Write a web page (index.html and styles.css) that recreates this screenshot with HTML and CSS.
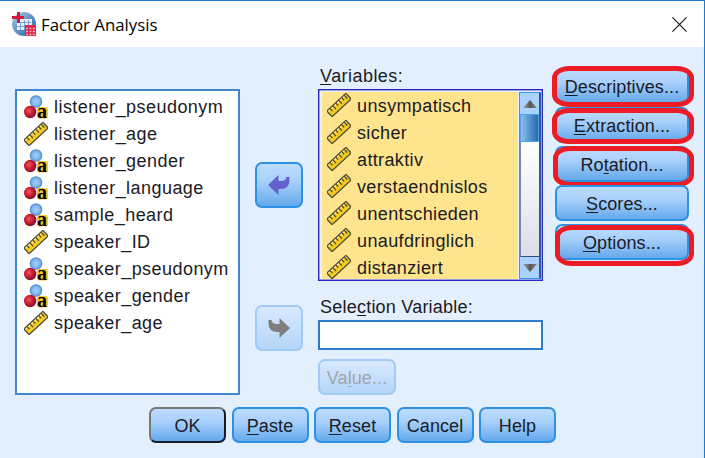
FILE: index.html
```html
<!DOCTYPE html>
<html lang="en">
<head>
<meta charset="utf-8">
<title>Factor Analysis</title>
<link rel="stylesheet" href="styles.css">
</head>
<body>
<svg class="defs" width="0" height="0" aria-hidden="true">
  <defs>
    <radialGradient id="blueBall"><stop offset="0" stop-color="#a5d0fa"/><stop offset=".65" stop-color="#7db5ee"/><stop offset="1" stop-color="#4b83c4"/></radialGradient>
    <radialGradient id="redBall" cx=".4" cy=".4"><stop offset="0" stop-color="#ef5663"/><stop offset=".6" stop-color="#cf2036"/><stop offset="1" stop-color="#96152b"/></radialGradient>
    <linearGradient id="globe" x2="1" y2="1"><stop offset="0" stop-color="#b9cee5"/><stop offset=".5" stop-color="#5f94c9"/><stop offset="1" stop-color="#27649f"/></linearGradient>
    <linearGradient id="tip"><stop offset="0" stop-color="#aaa"/><stop offset=".5" stop-color="#555"/><stop offset="1" stop-color="#888"/></linearGradient>
  </defs>
  <symbol id="nominal" viewBox="0 0 24 24">
    <circle cx="12" cy="6.500" r="6.300" fill="url(#blueBall)"/>
    <circle cx="6.200" cy="17" r="6.200" fill="url(#redBall)"/>
    <rect x="13" y="12" width="11" height="11.500" rx="2" fill="#f5c829"/>
  </symbol>
  <symbol id="scale" viewBox="0 0 24 24">
    <g transform="translate(12 12) rotate(-43)">
      <rect x="-13" y="-3.8" width="26" height="7.6" fill="#f4cb22" stroke="#4e4d3c" stroke-width="1.3"/>
      <path d="M-12-2.5H12" stroke="#fff0a0" stroke-width="1"/>
      <path d="M-9-3.5V0M-5-3.5V1M-1-3.5V0M3-3.5V1M7-3.5V0M10.500-3.500V1" stroke="#44412b" stroke-width="1.2"/>
    </g>
  </symbol>
</svg>
<main class="window">
  <header class="titlebar">
    <svg class="logo" viewBox="0 0 24 24">
      <circle cx="12" cy="12" r="12" fill="url(#globe)"/>
      <path d="M8 7H20V18H5V11H8Z" fill="#e8f1fa"/>
      <path d="M5 14.500H19M9 10.500H19M8.500 10V18M12.500 8V18M16.500 8V18" stroke="#79a4cf" stroke-width="1"/>
      <path d="M5 0H8V4H12V7H8V11H5V7H0V4H5Z" fill="#d3183c"/>
      <rect x="13" y="13" width="11" height="11" fill="#d8254a"/>
      <path d="M14 16.500H23M14 19.500H23M14 22.500H23" stroke="#f5b4c0" stroke-width="1.500" stroke-dasharray="2 1.400"/>
    </svg>
    <h1 class="title">Factor Analysis</h1>
    <svg class="close" viewBox="0 0 16 16"><path d="M.5.5 15.500 15.500M15.500.5.5 15.500" stroke="#111" stroke-width="1.200"/></svg>
  </header>
  <div class="content">
    <ul class="list source">
      <li><svg><use href="#nominal"/><text class="letter" x="13" y="23">a</text></svg>listener_pseudonym</li>
      <li><svg><use href="#scale"/></svg>listener_age</li>
      <li><svg><use href="#nominal"/><text class="letter" x="13" y="23">a</text></svg>listener_gender</li>
      <li><svg><use href="#nominal"/><text class="letter" x="13" y="23">a</text></svg>listener_language</li>
      <li><svg><use href="#nominal"/><text class="letter" x="13" y="23">a</text></svg>sample_heard</li>
      <li><svg><use href="#scale"/></svg>speaker_ID</li>
      <li><svg><use href="#nominal"/><text class="letter" x="13" y="23">a</text></svg>speaker_pseudonym</li>
      <li><svg><use href="#nominal"/><text class="letter" x="13" y="23">a</text></svg>speaker_gender</li>
      <li><svg><use href="#scale"/></svg>speaker_age</li>
    </ul>
    <div class="transfer">
      <button class="btn move" aria-label="Remove"><svg viewBox="0 0 22 20"><path d="M0 10 10.500 0V6H13C16 6 18 5 18.500 2H21.500V5C21.500 11 18 14 13 14H10.500V20Z" fill="#6560cf"/></svg></button>
      <button class="btn move off" disabled aria-label="Add"><svg viewBox="0 0 22 20"><path d="M22 10 11.500 0V6H9C6 6 4 5 3.500 2H.5V5C.5 11 4 14 9 14H11.500V20Z" fill="#7f7f7f"/></svg></button>
    </div>
    <section class="middle">
      <label class="label"><u>V</u>ariables:</label>
      <div class="variables">
        <ul class="list chosen">
          <li><svg><use href="#scale"/></svg>unsympatisch</li>
          <li><svg><use href="#scale"/></svg>sicher</li>
          <li><svg><use href="#scale"/></svg>attraktiv</li>
          <li><svg><use href="#scale"/></svg>verstaendnislos</li>
          <li><svg><use href="#scale"/></svg>unentschieden</li>
          <li><svg><use href="#scale"/></svg>unaufdringlich</li>
          <li><svg><use href="#scale"/></svg>distanziert</li>
        </ul>
        <div class="scrollbar">
          <div class="step"><svg viewBox="0 0 14 8"><path d="M0 8 7 0 14 8Z" fill="url(#tip)"/></svg></div>
          <div class="thumb"></div>
          <div class="track"></div>
          <div class="step"><svg viewBox="0 0 14 8"><path d="M0 0H14L7 8Z" fill="url(#tip)"/></svg></div>
        </div>
      </div>
      <label class="label selection">Sele<u>c</u>tion Variable:</label>
      <div class="field"></div>
      <button class="btn value off" disabled><span>Va<u>l</u>ue...</span></button>
    </section>
    <nav class="side">
      <button class="btn marked m1"><span><u>D</u>escriptives...</span></button>
      <button class="btn marked m2"><span><u>E</u>xtraction...</span></button>
      <button class="btn marked m3"><span>Ro<u>t</u>ation...</span></button>
      <button class="btn"><span><u>S</u>cores...</span></button>
      <button class="btn marked m5"><span><u>O</u>ptions...</span></button>
    </nav>
  </div>
  <footer class="actions">
    <button class="btn default"><span>OK</span></button>
    <button class="btn"><span><u>P</u>aste</span></button>
    <button class="btn"><span><u>R</u>eset</span></button>
    <button class="btn"><span>Cancel</span></button>
    <button class="btn"><span>Help</span></button>
  </footer>
</main>
</body>
</html>
```
FILE: styles.css
```css
*, *::after { box-sizing: border-box; }
body { margin: 0; }
.defs { position: absolute; }
.window {
  width: 705px; height: 458px; overflow: hidden;
  background: #e3effc;
  border-top: 1px solid #1a7bd0; border-right: 1px solid #1a7bd0;
  font: 18px/27px "Liberation Sans", sans-serif;
  letter-spacing: .45px; color: #1b1b25;
}
u { text-decoration-thickness: 1px; text-underline-offset: 2px; text-decoration-skip-ink: none; }
.titlebar {
  height: 46px; padding: 0 17px 0 12px;
  display: flex; align-items: center; background: #fff;
}
.logo { width: 24px; height: 24px; }
.title {
  margin: 0 auto 0 5px; padding-top: 1px;
  font: 400 16.8px/24px "Open Sans", sans-serif; letter-spacing: 0; color: #000;
}
.close { width: 15px; height: 15px; }
.content {
  height: 348px; padding-left: 15px;
  display: grid; grid-template-columns: 225px 48px 225px 134px;
  column-gap: 15px; align-items: start;
}
.list { list-style: none; margin: 0; padding: 0; }
.list li { height: 27px; display: flex; align-items: center; white-space: nowrap; }
.list svg { width: 24px; height: 24px; flex: none; margin-bottom: 2px; overflow: visible; }
.letter { font: bold 20px "Liberation Serif", serif; letter-spacing: 0; fill: #000; }
.source {
  height: 306px; margin-top: 42px; padding: 3px 0 0 7px;
  background: #fff; border: 2px solid #4187d0;
}
.source svg { margin-right: 6px; }
.transfer { padding-top: 115px; display: grid; gap: 97px; }
.btn {
  height: 36px; padding: 0;
  display: flex; align-items: center; justify-content: center;
  font: inherit; letter-spacing: .1px; color: inherit;
  border: 2px solid #2d91e5; border-radius: 7px;
  background: linear-gradient(#bedcff, #a8d0fb 40%, #65a9ec);
}
.btn span { padding-top: 2px; }
.move { width: 48px; height: 46px; }
.move svg { width: 22px; height: 20px; }
.off { border-color: #9fcbf5; background: linear-gradient(#d8e9ff, #b4d6f9); color: #a2a5aa; }
.middle { padding-top: 16px; }
.label { display: block; height: 26px; line-height: 27px; padding-left: 2px; }
.variables {
  height: 192px; padding: 2px 1px 2px 3px; display: flex;
  background: #edf3fc; border: 1px solid #2929bd; box-shadow: inset 0 0 0 .5px #4b4bcf;
}
.chosen { flex: 1; height: 187px; overflow: hidden; background: #fee48c; margin-right: 1px; padding-top: 1px; letter-spacing: .37px; }
.chosen li { padding-left: 5px; }
.chosen svg { margin-right: 6px; margin-bottom: 3px; }
.scrollbar {
  width: 22px; height: 187px; display: grid; grid-template-rows: 21px 28px 1fr 21px;
  border: 1px solid #3598f4; border-right: 2px solid #285b91;
}
.step { display: grid; place-items: center; background: #a9d2ff; }
.step svg { width: 14px; height: 8px; margin: 0; }
.thumb { border: 1px solid #4ea4f0; background: linear-gradient(90deg, #8fbfe8, #5596cf 50%, #2c6aab); }
.track { border-left: 1px solid #788ba4; border-bottom: 1px solid #304f7b; background: linear-gradient(#fff, #ddddeb); }
.selection { margin-top: 13px; letter-spacing: .22px; }
.field { height: 30px; background: #fff; border: 2px solid #2c7ccc; }
.value { width: 78px; margin-top: 9px; letter-spacing: .1px; }
.side { margin-left: -3px; width: 134px; padding-top: 21px; display: grid; gap: 3px; }
.side .btn { position: relative; }
.marked::after {
  content: ""; position: absolute; left: -5px; top: -4px;
  width: 142px; height: 41px; border: 5px solid #ed1c24; border-radius: 17px / 12px;
}
.m2::after { top: -1px; height: 36px; }
.m3::after { left: -4px; top: -2px; width: 141px; height: 41px; }
.m5::after { left: -2px; top: -1px; width: 139px; height: 41px; }
.actions { padding: 12px 0 0 149px; display: grid; grid-template-columns: repeat(5, 77px); gap: 5.5px; }
.default { border-color: #777 #151d28 #151d28 #777; }
```
